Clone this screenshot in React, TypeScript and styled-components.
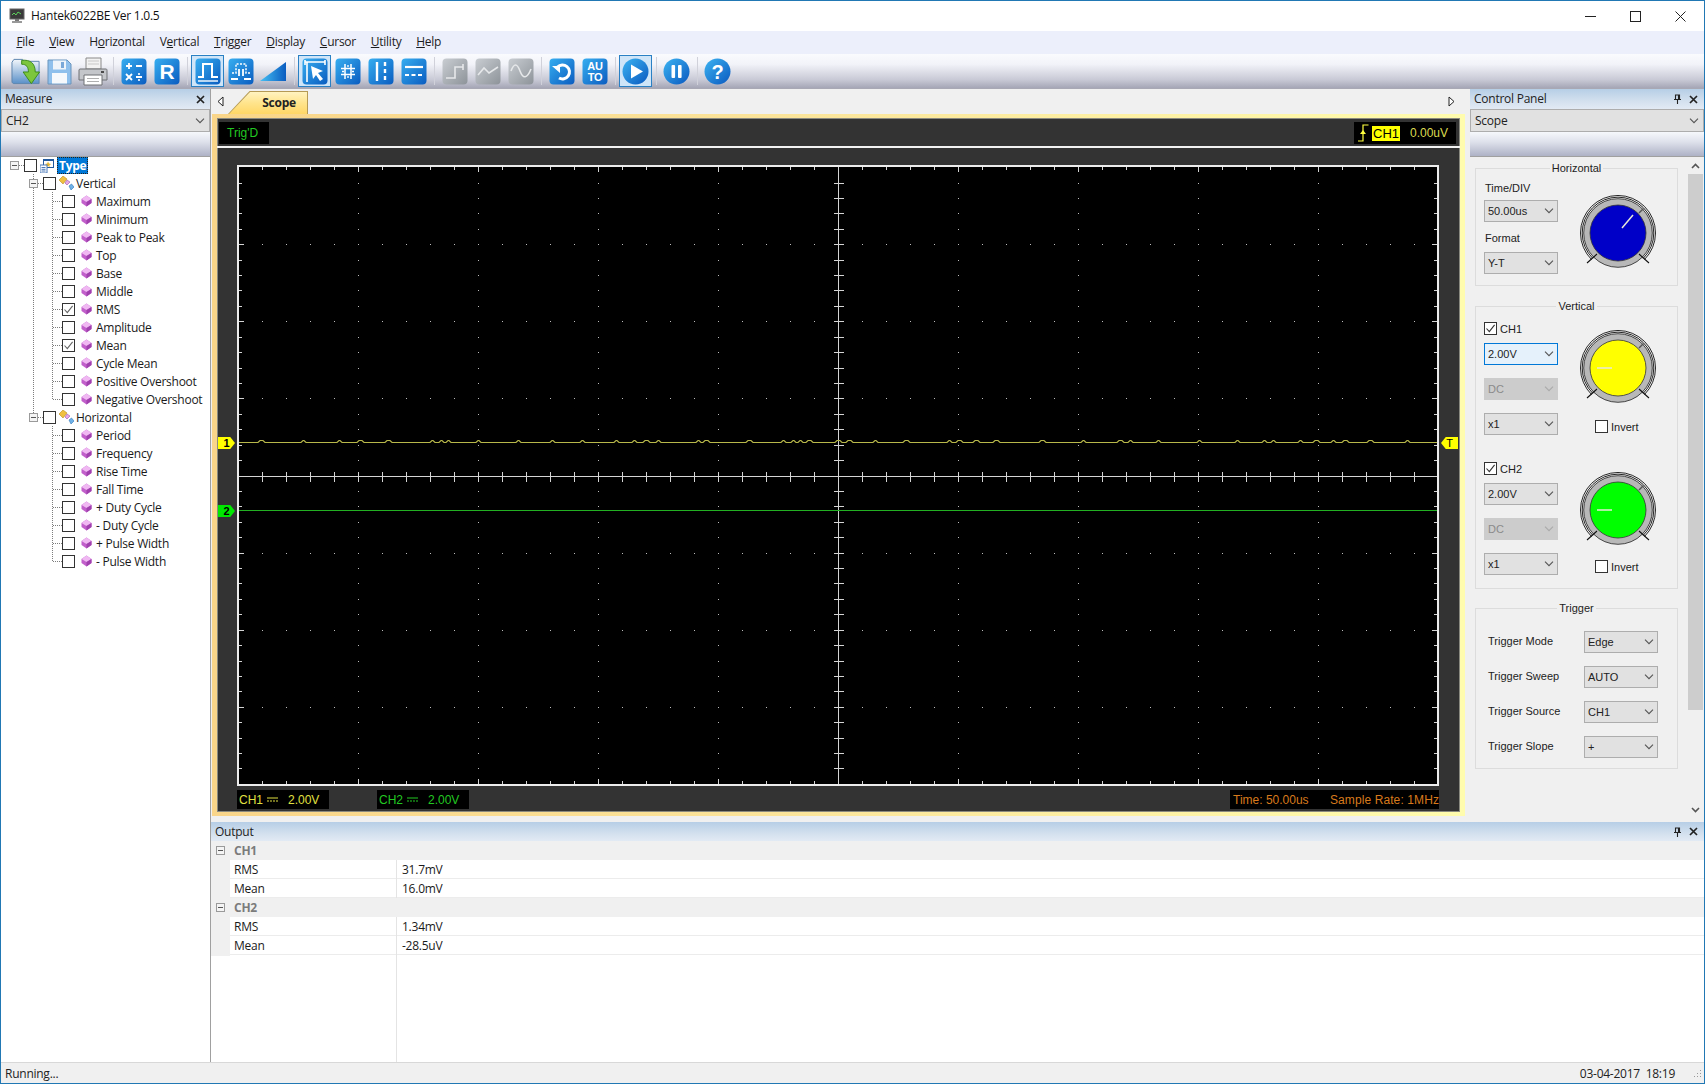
import React, { useId } from "react";
import styled, { createGlobalStyle } from "styled-components";

const UI = `"Open Sans", "Noto Sans", sans-serif`;
const CLASSIC = `"Liberation Sans", Arial, sans-serif`;

const GlobalStyle = createGlobalStyle`
  html, body { margin: 0; padding: 0; background: #f0f0f0; }
  * { box-sizing: border-box; }
`;

const Window = styled.div`
  width: 1705px; height: 1084px; display: flex; flex-direction: column;
  border: 1px solid #2178b4; background: #f0f0f0; overflow: hidden;
  font: 12px/16px ${UI}; letter-spacing: -0.25px; color: #1a1a1a;
`;
const TitleBar = styled.div`
  height: 30px; flex: none; background: #fff; display: flex; align-items: center; padding-left: 8px;
`;
const TitleText = styled.span`margin-left: 6px; color: #111;`;
const WinButtons = styled.div`margin-left: auto; display: flex; margin-right: 1px;`;
const WinButton = styled.div`width: 45px; height: 30px; display: flex; align-items: center; justify-content: center;`;

const MenuBar = styled.div`
  height: 23px; flex: none; background: #eceffb; display: flex; align-items: center; padding: 0 0 2px 8px;
`;
const MenuItem = styled.span`padding: 0 7.4px; color: #1c1c1c;`;

const ToolBar = styled.div`
  height: 35px; flex: none; display: flex; align-items: center; padding-left: 9px;
  background: linear-gradient(to bottom, #fafbfe 0%, #f2f3f9 30%, #c9cad6 75%, #a5a6b6 100%);
  border-bottom: 1px solid #a8a8b4;
`;
const ToolSlot = styled.div<{ $on?: boolean }>`
  width: 33px; height: 32px; display: flex; align-items: center; justify-content: center;
  border: 1px solid ${p => (p.$on ? "#2a80c4" : "transparent")};
  background: ${p => (p.$on ? "#cfe5f8" : "transparent")};
`;
const ToolSep = styled.div`
  width: 8px; height: 28px; flex: none; display: flex; justify-content: center;
  &::after { content: ""; width: 1px; background: #d0d1da; }
`;

const Body = styled.div`flex: 1; min-height: 0; display: flex;`;
const LeftPanel = styled.div`
  width: 210px; flex: none; display: flex; flex-direction: column; border-right: 1px solid #a0a0a0; background: #fff;
`;
const DockHeader = styled.div`
  height: 20px; flex: none; display: flex; align-items: center; padding: 0 5px 0 4px; gap: 7px; color: #222;
  background: linear-gradient(to bottom, #b6cee6 0%, #d3e0ee 60%, #e2eaf4 100%);
`;
const PinnedHeader = styled(DockHeader)`padding-right: 6px;`;
const DockTitle = styled.span`margin-right: auto;`;
const DockCombo = styled.div`
  height: 23px; flex: none; display: flex; align-items: center; justify-content: space-between; padding: 0 4px;
  background: #e1e1e1; border: 1px solid #adadad; color: #222;
`;
const DockStrip = styled.div`
  height: 25px; flex: none; background: linear-gradient(to bottom, #f6f8fc 0%, #dfe2ec 40%, #aeb2c6 100%);
  border-bottom: 1px solid #a0a0a0;
`;
const Tree = styled.div`flex: 1; background: #fff;`;
const TreeRow = styled.div<{ $root?: boolean }>`
  height: ${p => (p.$root ? "17px" : "18px")}; display: flex; align-items: center; padding-left: 4px;
`;

const DOT_V = `repeating-linear-gradient(to bottom, #7d7d7d 0 1px, transparent 1px 2px)`;
const DOT_H = `repeating-linear-gradient(to right, #7d7d7d 0 1px, transparent 1px 2px)`;
const guideBg: Record<string, string> = {
  blank: "none",
  through: DOT_V,
  tee: `${DOT_V}, ${DOT_H}`,
  end: `${DOT_V}, ${DOT_H}`,
  root: DOT_H,
};
const guideSize: Record<string, string> = {
  blank: "auto",
  through: "1px 100%",
  tee: "1px 100%, 50% 1px",
  end: "1px 50%, 50% 1px",
  root: "50% 1px",
};
const guidePos: Record<string, string> = {
  blank: "0 0",
  through: "center top",
  tee: "center top, right center",
  end: "center top, right center",
  root: "right center",
};
const Guide = styled.div<{ $k: string }>`
  width: 19px; height: 18px; flex: none; display: flex; align-items: center; justify-content: center;
  background-image: ${p => guideBg[p.$k]};
  background-size: ${p => guideSize[p.$k]};
  background-position: ${p => guidePos[p.$k]};
  background-repeat: no-repeat;
`;
const Expander = styled.div`
  width: 9px; height: 9px; border: 1px solid #9a9a9a; background: #f4f4f4; display: flex; align-items: center; justify-content: center;
  &::after { content: ""; width: 5px; height: 1px; background: #555; }
`;
const Check = styled.div`
  width: 13px; height: 13px; flex: none; background: #fff; border: 1px solid #333;
  display: flex; align-items: center; justify-content: center;
`;
const TreeIcon = styled.span<{ $w: number }>`
  width: ${p => p.$w}px; flex: none; display: flex; justify-content: center; margin-left: 3px;
`;
const TreeLabel = styled.span<{ $sel?: boolean }>`
  color: ${p => (p.$sel ? "#fff" : "#1a1a1a")};
  background: ${p => (p.$sel ? "#0078d7" : "transparent")};
  font-weight: ${p => (p.$sel ? 700 : 400)};
  outline: ${p => (p.$sel ? "1px dotted #222" : "none")};
  outline-offset: -1px;
  padding: 0 ${p => (p.$sel ? "2px" : "0")};
  margin-left: ${p => (p.$sel ? "3px" : "2px")};
  line-height: 17px;
`;

const RightColumn = styled.div`flex: 1; min-width: 0; display: flex; flex-direction: column;`;
const UpperRow = styled.div`flex: 1; min-height: 0; display: flex; padding-left: 1px;`;
const DocArea = styled.div`width: 1253px; flex: none; display: flex; flex-direction: column; padding-bottom: 6px;`;
const TabStrip = styled.div`height: 25px; flex: none; display: flex; align-items: flex-end; background: #f0f0f0; padding-right: 6px;`;
const TabArrow = styled.div`width: 16px; height: 25px; flex: none; display: flex; align-items: center; justify-content: center;`;
const TabOuter = styled.div`
  width: 80px; height: 23px; background: #b59a55; padding: 1px 1px 0 1px;
  clip-path: polygon(0 100%, 27% 0, 100% 0, 100% 100%);
`;
const TabInner = styled.div`
  height: 100%; background: linear-gradient(to bottom, #fff3c0 0%, #ffe48c 50%, #ffd766 100%);
  clip-path: polygon(0 100%, 27% 0, 100% 0, 100% 100%);
  display: flex; align-items: center; justify-content: center; padding-left: 22px;
  font-weight: 700; color: #222;
`;
const TabSpacer = styled.div`flex: 1;`;
const Frame = styled.div`
  flex: 1; min-height: 0; display: flex; flex-direction: column; background: #333;
  border-style: solid; border-width: 4px 5px 4px 5px;
  border-image: linear-gradient(to right, #f9d589 0%, #fbe49a 45%, #fffcae 100%) 1;
  box-shadow: inset 0 0 0 1px #8a8a80;
  padding: 1px;
  font: 12px/16px ${CLASSIC}; letter-spacing: 0;
`;
const ScopeTop = styled.div`display: flex; justify-content: space-between; padding: 3px 3px 3px 1px; height: 27px; flex: none;`;
const ReadoutBox = styled.div<{ $c: string; $w: number; $pl: number }>`
  background: #000; color: ${p => p.$c}; display: flex; align-items: center; height: 22px; width: ${p => p.$w}px; padding-left: ${p => p.$pl}px;
`;
const TrigBadge = styled.span`background: #ffff00; color: #000; padding: 0 1px; margin: 0 10px 0 3px; line-height: 15px; font-size: 13px;`;
const WhiteRule = styled.div`height: 2px; flex: none; background: #f2f2f2; margin: 0 -1px;`;
const PlotRow = styled.div`display: flex; margin-top: 17px; margin-left: -1px; margin-right: -1px;`;
const SideRail = styled.div<{ $w: number }>`width: ${p => p.$w}px; flex: none; position: relative;`;
const PlotBox = styled.div`width: 1202px; height: 621px; flex: none; border: 2px solid #ececec; background: #000; display: flex;`;
const Marker = styled.div<{ $c: string; $y: number; $right?: boolean }>`
  position: absolute; top: ${p => p.$y}px; ${p => (p.$right ? "right: 0; width: 17px;" : "left: 1px; width: 17px;")}
  height: 12px; background: ${p => p.$c}; color: #000; font: ${p => (p.$right ? "normal" : "bold")} 11px/12px ${CLASSIC}; text-align: center;
  clip-path: ${p => (p.$right
    ? "polygon(0 50%, 28% 0, 100% 0, 100% 100%, 28% 100%)"
    : "polygon(0 0, 72% 0, 100% 50%, 72% 100%, 0 100%)")};
`;
const ScopeBottom = styled.div`display: flex; margin-top: 4px; padding-left: 19px; padding-right: 20px; height: 19px; flex: none;`;
const InfoBox = styled.div<{ $c: string }>`
  width: 92px; height: 19px; background: #000; color: ${p => p.$c}; display: flex; align-items: center; padding-left: 2px; gap: 4px;
  margin-right: 48px;
`;
const InfoValue = styled.span`margin-left: 6px;`;
const RateBox = styled.div`
  margin-left: auto; width: 209px; height: 19px; background: #000; color: #d87a1c; display: flex; align-items: center;
  padding-left: 3px; justify-content: space-between; white-space: nowrap;
`;
const RateText = styled.span`letter-spacing: 0.1px;`;

const Splitter = styled.div`width: 5px; flex: none;`;
const ControlPanel = styled.div`flex: 1; min-width: 0; display: flex; flex-direction: column;`;
const PanelBody = styled.div`height: 661px; flex: none; display: flex;`;
const PanelContent = styled.div`
  width: 218px; flex: none; padding: 11px 10px 0 5px; display: flex; flex-direction: column;
  font: 11px/14px ${CLASSIC}; letter-spacing: 0; color: #222;
`;
const ScrollBar = styled.div`width: 15px; flex: none; display: flex; flex-direction: column; background: #f0f0f0;`;
const ScrollUp = styled.div`height: 17px; flex: none; display: flex; align-items: center; justify-content: center;`;
const ScrollDown = styled.div`height: 108px; flex: none; display: flex; align-items: flex-end; justify-content: center; padding-bottom: 5px;`;
const ScrollThumb = styled.div`flex: 1; background: #cdcdcd;`;
const Group = styled.div<{ $h: number; $mt?: number }>`
  height: ${p => p.$h}px; flex: none; border: 1px solid #dcdcdc; padding: 0 0 0 8px;
  margin-top: ${p => p.$mt ?? 0}px;
`;
const Legend = styled.div`
  width: fit-content; height: 14px; margin: -8px auto 0; padding: 0 2px; background: #f0f0f0; color: #222;
  position: relative; left: -4px;
`;
const KnobRow = styled.div`display: flex; align-items: flex-start;`;
const FormCol = styled.div`width: 74px; flex: none; display: flex; flex-direction: column;`;
const KnobCol = styled.div<{ $top: number }>`margin-left: 20px; padding-top: ${p => p.$top}px; flex: none;`;
const KnobSvg = styled.svg`display: block;`;
const FieldLabel = styled.div<{ $mt: number }>`margin-top: ${p => p.$mt}px; height: 14px; padding-left: 1px;`;
const Select = styled.div<{ $mt?: number; $off?: boolean; $focus?: boolean }>`
  width: 74px; height: 22px; flex: none; margin-top: ${p => p.$mt ?? 0}px; padding: 0 3px 0 3px;
  display: flex; align-items: center; justify-content: space-between;
  border: 1px solid ${p => (p.$focus ? "#0078d7" : p.$off ? "#cccccc" : "#adadad")};
  background: ${p => (p.$focus ? "#e5f1fb" : p.$off ? "#cccccc" : "#e1e1e1")};
  color: ${p => (p.$off ? "#8a8a8a" : "#222")};
`;
const CheckRow = styled.div<{ $mt?: number; $ml?: number }>`
  display: flex; align-items: center; gap: 3px; height: 13px;
  margin-top: ${p => p.$mt ?? 0}px; margin-left: ${p => p.$ml ?? 0}px;
`;
const TriggerRows = styled.div`display: flex; flex-direction: column; gap: 13px; padding: 16px 0 0 4px;`;
const TriggerRow = styled.div`display: flex; align-items: center; height: 22px;`;
const TriggerLabel = styled.span`width: 96px; flex: none; margin-top: -2px;`;

const Output = styled.div`height: 240px; flex: none; display: flex; flex-direction: column; background: #fff;`;
const OutHeader = styled(PinnedHeader)`height: 19px;`;
const OutGroup = styled.div`
  height: 19px; flex: none; background: #f0f0f0; display: flex; align-items: center; color: #7b7b7b; font-weight: 700;
`;
const OutGutter = styled.div`width: 19px; flex: none; display: flex; justify-content: center;`;
const OutGroupName = styled.span`padding-left: 4px;`;
const OutRow = styled.div<{ $fill?: boolean }>`
  height: ${p => (p.$fill ? "auto" : "19px")}; ${p => (p.$fill ? "flex: 1;" : "flex: none;")}
  display: grid; grid-template-columns: 19px 167px 1fr; align-items: center;
  ${p => (p.$fill ? "" : "border-bottom: 1px solid #ececec;")}
`;
const OutGutterCell = styled.div`background: #f0f0f0; align-self: stretch;`;
const OutName = styled.div`padding-left: 4px; border-right: 1px solid #e4e4e4; align-self: stretch; line-height: 20px;`;
const OutValue = styled.div`padding-left: 5px; line-height: 20px; align-self: stretch;`;
const Status = styled.div`
  height: 21px; flex: none; background: #f0f0f0; display: flex; align-items: center; justify-content: space-between;
  padding: 2px 0 0 4px; border-top: 1px solid #d8d8d8; color: #222;
`;
const StatusRight = styled.div`display: flex; align-items: center; gap: 15px; padding-right: 2px;`;

/* ---------- small drawings ---------- */
const Chevron = ({ c = "#555" }: { c?: string }) => (
  <svg width="10" height="6" viewBox="0 0 10 6"><path d="M1 .7 5 4.7 9 .7" fill="none" stroke={c} strokeWidth="1.1" /></svg>
);
const CheckMark = ({ c = "#333" }: { c?: string }) => (
  <svg width="11" height="11" viewBox="0 0 11 11"><path d="M1.5 5.5 4.3 8.6 9.6 1.8" fill="none" stroke={c} strokeWidth="1.1" /></svg>
);
const CloseX = () => (
  <svg width="9" height="9" viewBox="0 0 9 9"><path d="M1 1 8 8M8 1 1 8" stroke="#222" strokeWidth="1.7" /></svg>
);
const Pin = () => (
  <svg width="9" height="10" viewBox="0 0 9 10"><path d="M2.5 1v4.5h4V1zM1 5.5h7M4.5 5.5V10M5.5 1.5v4" fill="none" stroke="#222" strokeWidth="1.1" /></svg>
);
const Gem = () => (
  <svg width="11" height="12" viewBox="0 0 11 12">
    <path d="M5.5 .5 10.5 4 10.5 8 5.5 11.5 .5 8 .5 4z" fill="#c25fcb" />
    <path d="M5.5 .5 10.5 4 5.5 7 .5 4z" fill="#f0b8f2" />
    <path d="M5.5 7 10.5 4V8L5.5 11.5z" fill="#a040ae" />
  </svg>
);
const TypeIcon = () => (
  <svg width="14" height="14" viewBox="0 0 14 14">
    <rect x="3" y="0" width="11" height="9" fill="#245a9c" />
    <rect x="4" y="2" width="9" height="6" fill="#fff" />
    <path d="M8 2.5 9 4.6 11.2 5 9.4 6.3 9.8 8 8 7 6.2 8 6.6 6.3 5 5l2.2-.4z" fill="#e9b830" />
    <rect x="0" y="6" width="7" height="8" fill="#fff" stroke="#4a78b8" />
    <path d="M1.5 8.5h4M1.5 10.3h4M1.5 12h4" stroke="#4a78b8" />
  </svg>
);
const BranchIcon = () => (
  <svg width="15" height="15" viewBox="0 0 15 15">
    <path d="M0 4 4 0 8 3 4 8z" fill="#f0c040" stroke="#b88a1c" strokeWidth=".6" />
    <path d="M8 4 11 6 8 9 6 7z" fill="#e7a8e8" stroke="#9b5aa8" strokeWidth=".6" />
    <path d="M10 10 12.5 8 15 11 12 14z" fill="#6fb2e8" stroke="#2e74b8" strokeWidth=".6" />
  </svg>
);
const Triangle = ({ dir }: { dir: "l" | "r" }) => (
  <svg width="7" height="11" viewBox="0 0 7 11">
    <path d={dir === "l" ? "M6 1 1 5.5 6 10z" : "M1 1 6 5.5 1 10z"} fill="#fff" stroke="#222" />
  </svg>
);
const DcMark = ({ c }: { c: string }) => (
  <svg width="11" height="5" viewBox="0 0 11 5"><path d="M0 1h11" stroke={c} /><path d="M0 4h11" stroke={c} strokeDasharray="2 1" /></svg>
);
const TrigMark = () => (
  <svg width="11" height="18" viewBox="0 0 11 18">
    <path d="M0 17H5V1H10.5" fill="none" stroke="#ffff40" strokeWidth="1.2" /><path d="M2 10 5 6 8 10z" fill="#ffff40" />
  </svg>
);

const Knob = ({ color, line }: { color: string; line: [number, number, number, number] }) => (
  <KnobSvg width="80" height="80" viewBox="0 0 80 80">
    <path d="M13.5 66.5A37.5 37.5 0 1 1 66.5 66.5" fill="none" stroke="#111" strokeWidth=".9" />
    <path d="M14.7 65.3A35.8 35.8 0 1 1 65.3 65.3" fill="none" stroke="#111" strokeWidth=".9" />
    <circle cx="40" cy="40" r="34.3" fill="#b8b8b8" stroke="#222" strokeWidth=".8" />
    <path d="M61 20 65.5 15.5" stroke="#555" strokeWidth="1.4" />
    <path d="M9 70 19 61M71 70 61 61" stroke="#111" strokeWidth="1.1" />
    <circle cx="40" cy="40" r="28" fill={color} stroke="#333" strokeWidth=".8" />
    <path d={`M${line[0]} ${line[1]}L${line[2]} ${line[3]}`} stroke="#e8e8d8" strokeWidth="1.5" />
  </KnobSvg>
);

type TileProps = { grey?: boolean; children?: React.ReactNode };
const Tile = ({ grey, children }: TileProps) => {
  const id = useId();
  return (
    <svg width="26" height="27" viewBox="0 0 26 27">
      <defs>
        <linearGradient id={id} x1="0" y1="0" x2="1" y2="1">
          <stop offset="0" stopColor={grey ? "#c9cdd2" : "#37aef0"} />
          <stop offset="1" stopColor={grey ? "#8d9399" : "#0a5cc0"} />
        </linearGradient>
      </defs>
      <rect x=".5" y=".5" width="25" height="26" rx="4" fill={`url(#${id})`} />
      {children}
    </svg>
  );
};
const Round = ({ children }: { children: React.ReactNode }) => {
  const id = useId();
  return (
    <svg width="27" height="27" viewBox="0 0 27 27">
      <defs>
        <linearGradient id={id} x1="0" y1="0" x2="1" y2="1">
          <stop offset="0" stopColor="#3cb4f2" />
          <stop offset="1" stopColor="#0a58bf" />
        </linearGradient>
      </defs>
      <circle cx="13.5" cy="13.5" r="13" fill={`url(#${id})`} />
      {children}
    </svg>
  );
};
const S = { fill: "none", stroke: "#fff", strokeWidth: 2 };
const GS = { fill: "none", stroke: "#e6e8ea", strokeWidth: 1.6 };
const tileText = { fill: "#fff", fontFamily: CLASSIC, fontWeight: 700 } as const;

const FolderIcon = () => {
  const id = useId();
  return (
    <svg width="32" height="29" viewBox="0 0 32 29">
      <defs>
        <linearGradient id={id} x1="0" y1="0" x2="0" y2="1"><stop offset="0" stopColor="#f2f6fb" /><stop offset="1" stopColor="#5a90c8" /></linearGradient>
      </defs>
      <path d="M1 5 3 2H12L14 4H29V27H3C2 27 1 26 1 25z" fill={`url(#${id})`} stroke="#5c84ad" />
      <path d="M11 3C20 2 25 6 25 15H29.5L21 27 12.5 15H18C18 10 16 7 11 7z" fill="#7cc63c" stroke="#3c8a1c" />
    </svg>
  );
};
const FloppyIcon = () => (
  <svg width="25" height="27" viewBox="0 0 25 27">
    <path d="M1 2H20L24 6V26H1z" fill="#8fc0ec" stroke="#6a94bc" />
    <rect x="6" y="2.5" width="13" height="9" fill="#eef4fa" /><rect x="14" y="4" width="3" height="6" fill="#7aa8d8" />
    <rect x="5" y="15" width="15" height="10.5" fill="#f6f9fc" />
  </svg>
);
const PrinterIcon = () => (
  <svg width="30" height="29" viewBox="0 0 30 29">
    <path d="M8 1H23V12H8z" fill="#f2f2f2" stroke="#8a8a8a" />
    <path d="M10 4H21M10 7H21" stroke="#c8c8c8" />
    <path d="M2 12H28C29 12 29 13 29 14V23H1V13C1 12.5 1.5 12 2 12z" fill="#c4c6ca" stroke="#6e7074" />
    <path d="M6 18H24V28H6z" fill="#fff" stroke="#6e7074" />
    <path d="M9 21.5H21M9 24.5H21" stroke="#b0b0b0" />
    <rect x="23" y="14" width="3" height="2" fill="#4a4a4a" />
  </svg>
);
const RampIcon = () => {
  const id = useId();
  return (
    <svg width="27" height="19" viewBox="0 0 27 19">
      <defs><linearGradient id={id} x1="0" y1="0" x2="1" y2="0"><stop offset="0" stopColor="#46c0f4" /><stop offset="1" stopColor="#0a5cc0" /></linearGradient></defs>
      <path d="M0 19 26 0V19z" fill={`url(#${id})`} />
    </svg>
  );
};

type ToolDef = { key: string; on?: boolean; icon?: React.ReactNode; sep?: boolean };
const tools: ToolDef[] = [
  { key: "open", icon: <FolderIcon /> },
  { key: "save", icon: <FloppyIcon /> },
  { key: "print", icon: <PrinterIcon /> },
  { key: "s1", sep: true },
  { key: "math", icon: <Tile><path d="M5 8h6M8 5v6M15 8h6M5 16l6 6M11 16l-6 6M15 19h6" {...S} strokeWidth={1.8} /><circle cx="18" cy="16" r="1.1" fill="#fff" /><circle cx="18" cy="22" r="1.1" fill="#fff" /></Tile> },
  { key: "ref", icon: <Tile><text x="13" y="21" textAnchor="middle" fontSize="21" {...tileText}>R</text></Tile> },
  { key: "s2", sep: true },
  { key: "pulse", on: true, icon: <Tile><path d="M3 19H8V6H17V19H23" {...S} /><path d="M3 23H23" stroke="#fff" strokeWidth="1.4" /></Tile> },
  { key: "dual", icon: <Tile><path d="M4 15H8V6H18V15H22" {...S} strokeWidth={1.5} strokeDasharray="2 1.4" /><path d="M11 11V18M15 11V18" stroke="#fff" strokeWidth="1.8" /><path d="M3 21H10M16 21H23" stroke="#fff" strokeWidth="1.8" /></Tile> },
  { key: "ramp", icon: <RampIcon /> },
  { key: "s3", sep: true },
  { key: "cursor", on: true, icon: <Tile><path d="M3 4H23M3 2V7M23 2V7M5 4V24" stroke="#fff" strokeWidth="1.6" fill="none" /><path d="M9 8 21 13 16 15 21 21 18 23 14 17 11 21z" fill="#fff" /></Tile> },
  { key: "grid", icon: <Tile><path d="M10 6V21M16 6V21M6 10.5H20M6 16.5H20" stroke="#fff" strokeWidth="1.5" /><path d="M13 7V9M13 18V20M7 13.5H9M17 13.5H19" stroke="#fff" strokeWidth="1.3" /></Tile> },
  { key: "vcur", icon: <Tile><path d="M9 4V23" stroke="#fff" strokeWidth="2.4" /><path d="M17 4V23" stroke="#fff" strokeWidth="2.4" strokeDasharray="4 3" /></Tile> },
  { key: "hcur", icon: <Tile><path d="M4 9H22" stroke="#fff" strokeWidth="2.2" /><path d="M4 17H22" stroke="#fff" strokeWidth="2.2" strokeDasharray="4 2.5" /></Tile> },
  { key: "s4", sep: true },
  { key: "step", icon: <Tile grey><path d="M4 20H13V9H21" {...GS} /><path d="M21 6V12" {...GS} /></Tile> },
  { key: "lin", icon: <Tile grey><path d="M3 17 9 10 14 15 23 9" {...GS} /></Tile> },
  { key: "sin", icon: <Tile grey><path d="M3 13C6 5 9 5 12 13S19 21 23 11" {...GS} /></Tile> },
  { key: "s5", sep: true },
  { key: "undo", icon: <Tile><path d="M8.5 9A7 7 0 1 1 10 20" {...S} strokeWidth={3} /><path d="M3 8H11V15z" fill="#fff" /></Tile> },
  { key: "auto", icon: <Tile><text x="13" y="12" textAnchor="middle" fontSize="11" {...tileText}>AU</text><text x="13" y="23" textAnchor="middle" fontSize="11" {...tileText}>TO</text></Tile> },
  { key: "s6", sep: true },
  { key: "run", on: true, icon: <Round><path d="M9 6.5 21 13.5 9 20.5z" fill="#fff" /></Round> },
  { key: "s7", sep: true },
  { key: "stop", icon: <Round><rect x="8.5" y="7" width="3.6" height="13" rx="1" fill="#fff" /><rect x="15" y="7" width="3.6" height="13" rx="1" fill="#fff" /></Round> },
  { key: "s8", sep: true },
  { key: "help", icon: <Round><text x="13.5" y="21" textAnchor="middle" fontSize="20" {...tileText}>?</text></Round> },
];

const menus: [string, string, string][] = [
  ["", "F", "ile"], ["", "V", "iew"], ["H", "o", "rizontal"], ["V", "e", "rtical"], ["", "T", "rigger"],
  ["", "D", "isplay"], ["", "C", "ursor"], ["", "U", "tility"], ["", "H", "elp"],
];

const vertical = ["Maximum", "Minimum", "Peak to Peak", "Top", "Base", "Middle", "RMS", "Amplitude", "Mean", "Cycle Mean", "Positive Overshoot", "Negative Overshoot"];
const horizontal = ["Period", "Frequency", "Rise Time", "Fall Time", "+ Duty Cycle", "- Duty Cycle", "+ Pulse Width", "- Pulse Width"];
const checkedItems = new Set(["RMS", "Mean"]);

const Item = ({ name, g1, g2 }: { name: string; g1: string; g2: string }) => (
  <TreeRow>
    <Guide $k="blank" /><Guide $k={g1} /><Guide $k={g2} />
    <Check>{checkedItems.has(name) && <CheckMark c="#666" />}</Check>
    <TreeIcon $w={16}><Gem /></TreeIcon>
    <TreeLabel>{name}</TreeLabel>
  </TreeRow>
);

/* ---------- the trace area ---------- */
const W = 1198, H = 617, CX = 598.5, CY = 308.5, DX = 24, DY = 15.42;
const px = (v: number) => Math.round(v);
function buildGrid() {
  let dots = "", ticks = "";
  for (let k = -5; k <= 5; k++) {
    for (let j = -20; j <= 20; j++) dots += `M${px(CX + 120 * k)} ${px(CY + DY * j)}h1v1h-1z`;
  }
  for (let m = -4; m <= 4; m++) {
    for (let n = -25; n <= 25; n++) dots += `M${px(CX + DX * n)} ${px(CY + 77.1 * m)}h1v1h-1z`;
  }
  for (let n = -24; n <= 24; n++) {
    const x = px(CX + DX * n) + 0.5, len = n % 5 === 0 ? 5 : 3;
    ticks += `M${x} 0v${len}M${x} ${H}v-${len}`;
    if (n !== 0) ticks += `M${x} ${px(CY) - 4.5}v10`;
  }
  for (let j = -19; j <= 19; j++) {
    const y = px(CY + DY * j) + 0.5, len = j % 5 === 0 ? 5 : 3;
    ticks += `M0 ${y}h${len}M${W} ${y}h-${len}`;
    if (j !== 0) ticks += `M${px(CX) - 4} ${y}h10`;
  }
  ticks += `M${px(CX) + 0.5} 0V${H}M0 ${px(CY) + 0.5}H${W}`;
  return { dots, ticks };
}
function buildWave() {
  let d = "M0 275.5", x = 0, seed = 23;
  while (x < W) {
    seed = (seed * 137 + 59) % 1009;
    const gap = seed % 4 === 0 ? 2 + (seed % 5) : 6 + (seed % 34);
    d += `H${x + gap}`;
    x += gap;
    const top = seed % 3 === 0 ? 3 : 1;
    d += `L${x + 2} 273.5H${x + 2 + top}L${x + 4 + top} 275.5`;
    x += 4 + top;
  }
  return d;
}
const grid = buildGrid();
const wave = buildWave();

const ChannelBlock = ({ name, focus, line, color, knobTop, invertGap, mt }: {
  name: string; focus?: boolean; line: [number, number, number, number]; color: string; knobTop: number; invertGap: number; mt: number;
}) => (
  <KnobRow>
    <FormCol>
      <CheckRow $mt={mt}><Check><CheckMark /></Check><span>{name}</span></CheckRow>
      <Select $mt={8} $focus={focus}><span>2.00V</span><Chevron /></Select>
      <Select $mt={13} $off><span>DC</span><Chevron c="#aaa" /></Select>
      <Select $mt={13}><span>x1</span><Chevron /></Select>
    </FormCol>
    <KnobCol $top={knobTop + mt}>
      <Knob color={color} line={line} />
      <CheckRow $mt={invertGap} $ml={17}><Check /><span>Invert</span></CheckRow>
    </KnobCol>
  </KnobRow>
);

export default function App() {
  return (
    <Window>
      <GlobalStyle />
      <TitleBar>
        <svg width="16" height="16" viewBox="0 0 16 16">
          <rect x="1" y="1" width="14" height="10" fill="#3a3a3a" stroke="#666" />
          <path d="M3 7 5 5 7 7 9 4 12 6" fill="none" stroke="#5cd05c" />
          <rect x="6" y="11" width="4" height="2" fill="#777" /><rect x="3" y="13" width="10" height="2" fill="#999" />
        </svg>
        <TitleText>Hantek6022BE Ver 1.0.5</TitleText>
        <WinButtons>
          <WinButton><svg width="11" height="11" viewBox="0 0 11 11"><path d="M0 5.5h11" stroke="#222" /></svg></WinButton>
          <WinButton><svg width="11" height="11" viewBox="0 0 11 11"><rect x=".5" y=".5" width="10" height="10" fill="none" stroke="#222" /></svg></WinButton>
          <WinButton><svg width="11" height="11" viewBox="0 0 11 11"><path d="M.5.5l10 10M10.5.5l-10 10" stroke="#222" /></svg></WinButton>
        </WinButtons>
      </TitleBar>
      <MenuBar>
        {menus.map(([a, b, c]) => <MenuItem key={a + b + c}>{a}<u>{b}</u>{c}</MenuItem>)}
      </MenuBar>
      <ToolBar>
        {tools.map(t => t.sep ? <ToolSep key={t.key} /> : <ToolSlot key={t.key} $on={t.on}>{t.icon}</ToolSlot>)}
      </ToolBar>
      <Body>
        <LeftPanel>
          <DockHeader><DockTitle>Measure</DockTitle><CloseX /></DockHeader>
          <DockCombo><span>CH2</span><Chevron /></DockCombo>
          <DockStrip />
          <Tree>
            <TreeRow $root>
              <Guide $k="root"><Expander /></Guide>
              <Check />
              <TreeIcon $w={14}><TypeIcon /></TreeIcon>
              <TreeLabel $sel>Type</TreeLabel>
            </TreeRow>
            <TreeRow>
              <Guide $k="blank" /><Guide $k="tee"><Expander /></Guide>
              <Check />
              <TreeIcon $w={15}><BranchIcon /></TreeIcon>
              <TreeLabel>Vertical</TreeLabel>
            </TreeRow>
            {vertical.map((n, i) => <Item key={n} name={n} g1="through" g2={i === vertical.length - 1 ? "end" : "tee"} />)}
            <TreeRow>
              <Guide $k="blank" /><Guide $k="end"><Expander /></Guide>
              <Check />
              <TreeIcon $w={15}><BranchIcon /></TreeIcon>
              <TreeLabel>Horizontal</TreeLabel>
            </TreeRow>
            {horizontal.map((n, i) => <Item key={n} name={n} g1="blank" g2={i === horizontal.length - 1 ? "end" : "tee"} />)}
          </Tree>
        </LeftPanel>
        <RightColumn>
          <UpperRow>
            <DocArea>
              <TabStrip>
                <TabArrow><Triangle dir="l" /></TabArrow>
                <TabOuter><TabInner>Scope</TabInner></TabOuter>
                <TabSpacer />
                <TabArrow><Triangle dir="r" /></TabArrow>
              </TabStrip>
              <Frame>
                <ScopeTop>
                  <ReadoutBox $c="#22c822" $w={50} $pl={8}>Trig'D</ReadoutBox>
                  <ReadoutBox $c="#dcdc50" $w={102} $pl={4}>
                    <TrigMark /><TrigBadge>CH1</TrigBadge><span>0.00uV</span>
                  </ReadoutBox>
                </ScopeTop>
                <WhiteRule />
                <PlotRow>
                  <SideRail $w={20}>
                    <Marker $c="#ffff00" $y={272}>1</Marker>
                    <Marker $c="#00e800" $y={340}>2</Marker>
                  </SideRail>
                  <PlotBox>
                    <svg width={W} height={H} viewBox={`0 0 ${W} ${H}`} shapeRendering="crispEdges">
                      <path d={grid.dots} fill="#bdbdbd" />
                      <path d={grid.ticks} stroke="#d4d4d4" fill="none" />
                      <path d={wave} fill="none" stroke="#b8b84a" strokeWidth="1.2" shapeRendering="auto" />
                      <path d="M0 343.5H1198" stroke="#22b022" />
                    </svg>
                  </PlotBox>
                  <SideRail $w={19}>
                    <Marker $c="#ffff00" $y={272} $right>T</Marker>
                  </SideRail>
                </PlotRow>
                <ScopeBottom>
                  <InfoBox $c="#e0e040"><span>CH1</span><DcMark c="#e0e040" /><InfoValue>2.00V</InfoValue></InfoBox>
                  <InfoBox $c="#22c822"><span>CH2</span><DcMark c="#22c822" /><InfoValue>2.00V</InfoValue></InfoBox>
                  <RateBox><span>Time: 50.00us</span><RateText>Sample Rate: 1MHz</RateText></RateBox>
                </ScopeBottom>
              </Frame>
            </DocArea>
            <Splitter />
            <ControlPanel>
              <PinnedHeader><DockTitle>Control Panel</DockTitle><Pin /><CloseX /></PinnedHeader>
              <DockCombo><span>Scope</span><Chevron /></DockCombo>
              <DockStrip />
              <PanelBody>
                <PanelContent>
                  <Group $h={118}>
                    <Legend>Horizontal</Legend>
                    <KnobRow>
                      <FormCol>
                        <FieldLabel $mt={6}>Time/DIV</FieldLabel>
                        <Select $mt={5}><span>50.00us</span><Chevron /></Select>
                        <FieldLabel $mt={9}>Format</FieldLabel>
                        <Select $mt={7}><span>Y-T</span><Chevron /></Select>
                      </FormCol>
                      <KnobCol $top={18}><Knob color="#0000c8" line={[44, 35, 55, 22]} /></KnobCol>
                    </KnobRow>
                  </Group>
                  <Group $h={283} $mt={20}>
                    <Legend>Vertical</Legend>
                    <ChannelBlock name="CH1" focus color="#ffff00" line={[19, 40, 34, 40]} knobTop={6} invertGap={12} mt={9} />
                    <ChannelBlock name="CH2" color="#00ff00" line={[19, 40, 34, 40]} knobTop={8} invertGap={10} mt={27} />
                  </Group>
                  <Group $h={161} $mt={19}>
                    <Legend>Trigger</Legend>
                    <TriggerRows>
                      {[["Trigger Mode", "Edge"], ["Trigger Sweep", "AUTO"], ["Trigger Source", "CH1"], ["Trigger Slope", "+"]].map(([l, v]) => (
                        <TriggerRow key={l}>
                          <TriggerLabel>{l}</TriggerLabel>
                          <Select><span>{v}</span><Chevron /></Select>
                        </TriggerRow>
                      ))}
                    </TriggerRows>
                  </Group>
                </PanelContent>
                <ScrollBar>
                  <ScrollUp><svg width="9" height="6" viewBox="0 0 9 6"><path d="M1 5 4.5 1.5 8 5" fill="none" stroke="#555" strokeWidth="1.6" /></svg></ScrollUp>
                  <ScrollThumb />
                  <ScrollDown>
                    <svg width="9" height="6" viewBox="0 0 9 6"><path d="M1 1 4.5 4.5 8 1" fill="none" stroke="#555" strokeWidth="1.6" /></svg>
                  </ScrollDown>
                </ScrollBar>
              </PanelBody>
            </ControlPanel>
          </UpperRow>
          <Output>
            <OutHeader><DockTitle>Output</DockTitle><Pin /><CloseX /></OutHeader>
            {[["CH1", "31.7mV", "16.0mV"], ["CH2", "1.34mV", "-28.5uV"]].map(([c, r, m]) => (
              <React.Fragment key={c}>
                <OutGroup><OutGutter><Expander /></OutGutter><OutGroupName>{c}</OutGroupName></OutGroup>
                <OutRow><OutGutterCell /><OutName>RMS</OutName><OutValue>{r}</OutValue></OutRow>
                <OutRow><OutGutterCell /><OutName>Mean</OutName><OutValue>{m}</OutValue></OutRow>
              </React.Fragment>
            ))}
            <OutRow $fill><span /><OutName /><OutValue /></OutRow>
          </Output>
        </RightColumn>
      </Body>
      <Status>
        <span>Running...</span>
        <StatusRight>
          <span>03-04-2017&nbsp;&nbsp;18:19</span>
          <svg width="12" height="12" viewBox="0 0 12 12"><path d="M10 2h1v1h-1zM7 5h1v1H7zM10 5h1v1h-1zM4 8h1v1H4zM7 8h1v1H7zM10 8h1v1h-1z" fill="#999" /></svg>
        </StatusRight>
      </Status>
    </Window>
  );
}
